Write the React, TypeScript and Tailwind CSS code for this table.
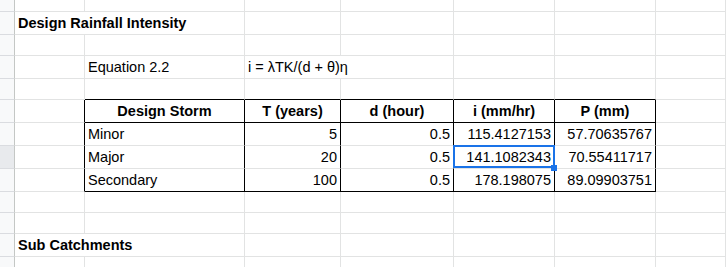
import React from "react";

type Cell = {
  t?: string;
  a?: "l" | "c" | "r";
  b?: boolean;
  span?: number;
  rk?: boolean;
  bk?: boolean;
};

type Row = { h: string; cells: Cell[]; sel?: boolean };

const E: Cell = {};

const rows: Row[] = [
  { h: "h-[12px]", cells: [E, E, E, E, E, E, E] },
  {
    h: "h-[23px]",
    cells: [{ t: "Design Rainfall Intensity", b: true, span: 2 }, E, E, E, E, E],
  },
  { h: "h-[21px]", cells: [E, E, E, E, E, E, E] },
  {
    h: "h-[23px]",
    cells: [E, { t: "Equation 2.2" }, { t: "i = λTK/(d + θ)η", span: 2 }, E, E, E],
  },
  {
    h: "h-[21px]",
    cells: [E, { bk: true }, { bk: true }, { bk: true }, { bk: true }, { bk: true }, E],
  },
  {
    h: "h-[23px]",
    cells: [
      { rk: true },
      { t: "Design Storm", b: true, a: "c", rk: true, bk: true },
      { t: "T (years)", b: true, a: "c", rk: true, bk: true },
      { t: "d (hour)", b: true, a: "c", rk: true, bk: true },
      { t: "i (mm/hr)", b: true, a: "c", rk: true, bk: true },
      { t: "P (mm)", b: true, a: "c", rk: true, bk: true },
      E,
    ],
  },
  {
    h: "h-[23px]",
    cells: [
      { rk: true },
      { t: "Minor", rk: true },
      { t: "5", a: "r", rk: true },
      { t: "0.5", a: "r", rk: true },
      { t: "115.4127153", a: "r", rk: true },
      { t: "57.70635767", a: "r", rk: true },
      E,
    ],
  },
  {
    h: "h-[23px]",
    sel: true,
    cells: [
      { rk: true },
      { t: "Major", rk: true },
      { t: "20", a: "r", rk: true },
      { t: "0.5", a: "r", rk: true },
      { t: "141.1082343", a: "r", rk: true },
      { t: "70.55411717", a: "r", rk: true },
      E,
    ],
  },
  {
    h: "h-[23px]",
    cells: [
      { rk: true },
      { t: "Secondary", rk: true, bk: true },
      { t: "100", a: "r", rk: true, bk: true },
      { t: "0.5", a: "r", rk: true, bk: true },
      { t: "178.198075", a: "r", rk: true, bk: true },
      { t: "89.09903751", a: "r", rk: true, bk: true },
      E,
    ],
  },
  { h: "h-[21px]", cells: [E, E, E, E, E, E, E] },
  { h: "h-[21px]", cells: [E, E, E, E, E, E, E] },
  {
    h: "h-[23px]",
    cells: [{ t: "Sub Catchments", b: true, span: 2 }, E, E, E, E, E],
  },
  { h: "h-[14px]", cells: [E, E, E, E, E, E, E] },
];

function DataCell({ c, h }: { c: Cell; h: string }) {
  const align =
    c.a === "c" ? "justify-center" : c.a === "r" ? "justify-end" : "justify-start";
  const span = c.span === 2 ? "col-span-2" : "";
  const br = c.rk ? "border-r-black" : "border-r-[#e2e3e3]";
  const bb = c.bk ? "border-b-black" : "border-b-[#e2e3e3]";
  return (
    <div
      className={`${h} ${span} ${align} ${br} ${bb} flex items-end border-r border-b bg-white px-[3px] pb-[3px] whitespace-nowrap`}
    >
      {c.t ? (
        <span className={`leading-[16px] text-black ${c.b ? "font-bold" : "font-normal"}`}>
          {c.t}
        </span>
      ) : null}
    </div>
  );
}

export default function App() {
  return (
    <div className="h-[267px] w-[726px] overflow-hidden bg-white font-['Liberation_Sans',Arial,sans-serif] text-[14.5px]">
      <div className="relative grid grid-cols-[15px_70px_160px_96px_113px_101px_101px_70px]">
        {rows.map((r, ri) => (
          <React.Fragment key={ri}>
            <div
              className={`${r.h} ${r.sel ? "bg-[#e8eaed]" : "bg-[#f8f9fa]"} border-r border-b border-r-[#c4c7c5] border-b-[#dadce0]`}
            />
            {r.cells.map((c, ci) => (
              <DataCell key={ci} c={c} h={r.h} />
            ))}
          </React.Fragment>
        ))}
        <div className="pointer-events-none absolute left-[453px] top-[145px] h-[23px] w-[102px] border-2 border-[#1a73e8]" />
        <div className="pointer-events-none absolute left-[551px] top-[165px] h-[6px] w-[6px] bg-[#1a73e8]" />
      </div>
    </div>
  );
}
